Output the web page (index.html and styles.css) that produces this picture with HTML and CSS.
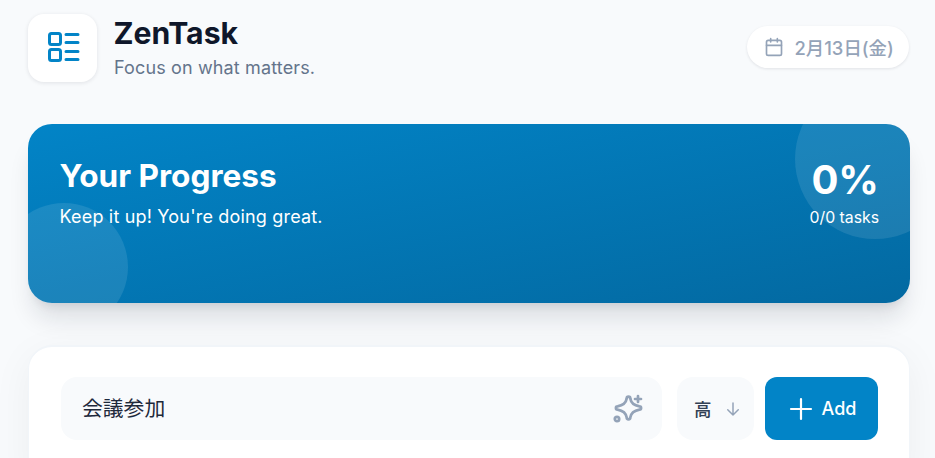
FILE: index.html
```html
<!DOCTYPE html>
<html lang="ja">
<head>
    <meta charset="UTF-8">
    <meta name="viewport" content="width=device-width, initial-scale=1.0">
    <title>ZenTask</title>
    <link rel="stylesheet" href="styles.css">
</head>
<body>

<div class="container">
    <header class="header">
        <div class="brand">
            <div class="logo">
                <svg width="36" height="36" viewBox="0 0 36 36" fill="none" stroke="#0284c7" stroke-width="3" stroke-linecap="round" stroke-linejoin="round">
                    <rect x="4.500" y="3.500" width="11" height="11" rx="2"/>
                    <rect x="4.500" y="19.500" width="11" height="11" rx="2"/>
                    <path d="M21 4.500h12M21 12.500h12M21 21.500h12M21 29.500h12"/>
                </svg>
            </div>
            <div>
                <h1>ZenTask</h1>
                <p class="tagline">Focus on what matters.</p>
            </div>
        </div>
        <div class="date-pill">
            <svg width="20" height="20" viewBox="0 0 24 24" fill="none" stroke="#94a3b8" stroke-width="2" stroke-linecap="round" stroke-linejoin="round">
                <rect x="3" y="4" width="18" height="18" rx="2"/>
                <path d="M16 2v4M8 2v4M3 10h18"/>
            </svg>
            <span>2月13日(金)</span>
        </div>
    </header>

    <section class="progress-card">
        <div class="circle circle-top"></div>
        <div class="circle circle-bottom"></div>
        <div class="progress-text">
            <h2>Your Progress</h2>
            <p>Keep it up! You're doing great.</p>
        </div>
        <div class="progress-stats">
            <div class="percent">0%</div>
            <div class="count">0/0 tasks</div>
        </div>
    </section>

    <section class="add-card">
        <div class="task-input">
            <span class="task-text">会議参加</span>
            <svg width="32" height="32" viewBox="0 0 32 32" fill="none" stroke="#94a3b8" stroke-width="2.700" stroke-linecap="round" stroke-linejoin="round">
                <path d="M14.700 5.500C14 10 11.500 12.300 5.500 13.400A1.600 1.600 0 0 0 5.500 16.600C11.500 17.700 14 20 14.700 24.500A1.800 1.800 0 0 0 18.300 24.500C19 20 21.500 17.700 27.500 16.600A1.600 1.600 0 0 0 27.500 13.400C21.500 12.300 19 10 18.300 5.500A1.800 1.800 0 0 0 14.700 5.500Z"/>
                <path d="M26 3v6M23 6h6"/>
                <circle cx="5" cy="26" r="2.200"/>
            </svg>
        </div>
        <div class="priority">
            <span>高</span>
            <svg width="18" height="18" viewBox="0 0 24 24" fill="none" stroke="#94a3b8" stroke-width="2" stroke-linecap="round" stroke-linejoin="round">
                <path d="M12 4v16M5 13l7 7 7-7"/>
            </svg>
        </div>
        <button class="add-btn">
            <svg width="24" height="24" viewBox="0 0 24 24" fill="none" stroke="#fff" stroke-width="2.200" stroke-linecap="round">
                <path d="M12 2v20M2 12h20"/>
            </svg>
            Add
        </button>
    </section>
</div>

</body>
</html>
```

FILE: styles.css
```css
* {
    box-sizing: border-box;
}
html, body {
    height: 100%;
    overflow: hidden;
}
body {
    margin: 0;
    background-color: #f8fafc;
    color: #0f172a;
    font-family: Inter, "Noto Sans CJK JP", sans-serif;
}
.container {
    padding: 14px 25px 0 28px;
}
.header {
    display: flex;
    align-items: center;
    justify-content: space-between;
    margin-bottom: 42px;
}
.brand {
    display: flex;
    align-items: center;
    gap: 17px;
}
.logo {
    width: 69px;
    height: 68px;
    display: flex;
    align-items: center;
    justify-content: center;
    background-color: #fff;
    border-radius: 16px;
    box-shadow: 0 1px 4px rgba(15, 23, 42, 0.1);
}
h1 {
    margin: -1px 0 0 -0.5px;
    font-size: 30.200px;
    line-height: 36px;
    font-weight: 700;
}
.tagline {
    margin: 5px 0 0;
    font-size: 18px;
    line-height: 24px;
    letter-spacing: 0.14px;
    color: #64748b;
}
.date-pill {
    display: flex;
    align-items: center;
    gap: 11px;
    width: 162px;
    height: 42px;
    margin: -2px 1px 0 0;
    padding-left: 16.500px;
    background-color: #fff;
    border-radius: 21px;
    box-shadow: 0 1px 3px rgba(15, 23, 42, 0.1);
    color: #94a3b8;
    font-size: 18.400px;
    font-weight: 500;
}
.progress-card {
    position: relative;
    overflow: hidden;
    display: flex;
    justify-content: space-between;
    height: 179px;
    padding: 32px 31px 32px 32px;
    border-radius: 24px;
    color: #fff;
    background: linear-gradient(to bottom right, #0284c7, #0369a1);
    box-shadow: 0 20px 25px -5px rgba(15, 23, 42, 0.12), 0 8px 10px -6px rgba(15, 23, 42, 0.1);
}
.circle {
    position: absolute;
    border-radius: 50%;
    background-color: rgba(255, 255, 255, 0.1);
}
.circle-top {
    width: 160px;
    height: 160px;
    top: -45px;
    right: -45px;
}
.circle-bottom {
    width: 128px;
    height: 128px;
    bottom: -28px;
    left: -28px;
}
.progress-text, .progress-stats {
    position: relative;
}
h2 {
    margin: 0 0 0 -0.5px;
    font-size: 31.600px;
    line-height: 40px;
    font-weight: 700;
}
.progress-text p {
    margin: 9px 0 0 -0.5px;
    font-size: 18px;
    line-height: 24px;
    letter-spacing: 0.18px;
}
.progress-stats {
    text-align: right;
}
.percent {
    margin-top: 2px;
    font-size: 40px;
    line-height: 44px;
    font-weight: 700;
}
.count {
    margin-top: 6px;
    font-size: 15.800px;
    line-height: 20px;
}
.add-card {
    display: flex;
    gap: 11px;
    height: 141px;
    margin-top: 42px;
    padding: 30px 31px 30px 32px;
    background-color: #fff;
    border: 1px solid #f1f5f9;
    border-top-width: 2px;
    border-radius: 24px;
    box-shadow: 0 10px 40px rgba(15, 23, 42, 0.05);
    align-items: flex-start;
}
.task-input {
    flex: 1;
    display: flex;
    align-items: center;
    justify-content: space-between;
    height: 63px;
    margin-right: 4px;
    padding: 0 18px 0 21px;
    background-color: #f8fafc;
    border-radius: 16px;
    font-size: 20.800px;
    color: #1e293b;
}
.task-text {
    margin-bottom: 3px;
}
.priority {
    display: flex;
    align-items: center;
    gap: 12px;
    width: 77px;
    height: 63px;
    padding-left: 17px;
    background-color: #f8fafc;
    border-radius: 16px;
    color: #334155;
    font-size: 17.500px;
    font-weight: 500;
}
.add-btn {
    display: flex;
    align-items: center;
    justify-content: center;
    gap: 9px;
    width: 113px;
    height: 63px;
    padding-left: 8px;
    border: none;
    border-radius: 12px;
    background-color: #0284c7;
    color: #fff;
    font-family: inherit;
    font-size: 18px;
    font-weight: 500;
}
```
